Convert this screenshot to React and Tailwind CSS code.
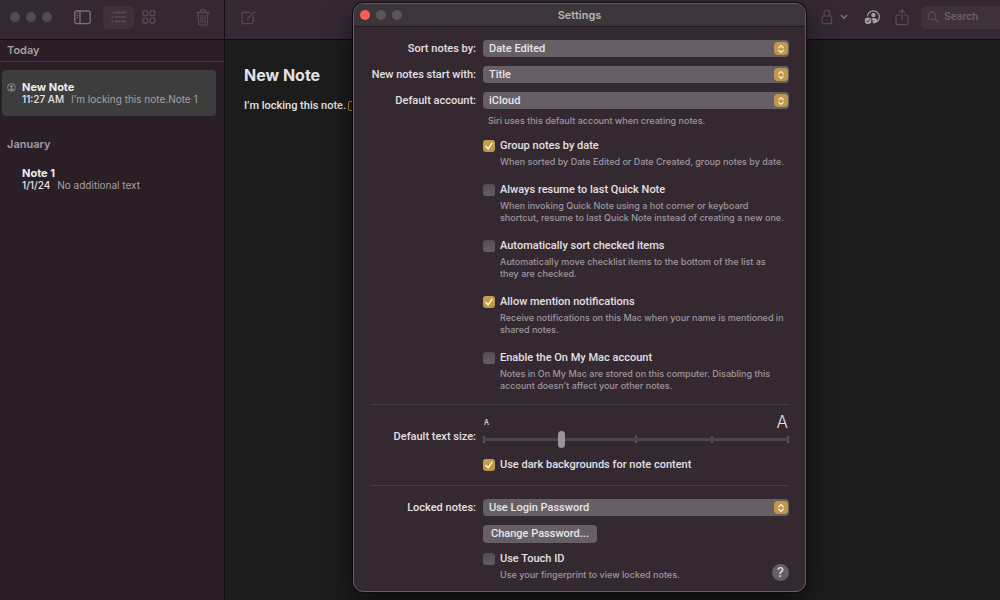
import { useState } from "react";

const options = {
  sort: ["Date Edited", "Date Created", "Title"],
  start: ["Title", "Heading", "Subheading", "Body"],
  account: ["iCloud", "On My Mac"],
  locked: ["Use Login Password", "Use Custom Password"],
};

function SidebarIcon() {
  return (
    <svg width="17" height="15" viewBox="0 0 17 15" fill="none" stroke="currentColor" strokeWidth="1.3">
      <rect x="0.8" y="1" width="15.4" height="12.6" rx="1.8" />
      <path d="M6 1v12.6" />
      <path d="M2.6 3.7h1.6M2.6 5.7h1.6M2.6 7.7h1.6" strokeWidth="1" />
    </svg>
  );
}

function ListIcon() {
  return (
    <svg width="16" height="14" viewBox="0 0 16 14" fill="none" stroke="currentColor" strokeWidth="1.3">
      <path d="M4.2 2.5h10.2M4.2 7h10.2M4.2 11.5h10.2" strokeLinecap="round" />
      <g fill="currentColor" stroke="none">
        <circle cx="1.4" cy="2.5" r="1" />
        <circle cx="1.4" cy="7" r="1" />
        <circle cx="1.4" cy="11.5" r="1" />
      </g>
    </svg>
  );
}

function GalleryIcon() {
  return (
    <svg width="14" height="14" viewBox="0 0 14 14" fill="none" stroke="currentColor" strokeWidth="1.3">
      <rect x="1" y="0.8" width="4.6" height="4.8" rx="1" />
      <rect x="8.2" y="0.8" width="4.6" height="4.8" rx="1" />
      <rect x="1" y="8.2" width="4.6" height="4.8" rx="1" />
      <rect x="8.2" y="8.2" width="4.6" height="4.8" rx="1" />
    </svg>
  );
}

function TrashIcon() {
  return (
    <svg width="14" height="17" viewBox="0 0 14 17" fill="none" stroke="currentColor" strokeWidth="1.2" strokeLinecap="round">
      <path d="M0.8 3.4h12.4" />
      <path d="M4.6 3.2V2c0-.7.4-1.1 1.1-1.1h2.6c.7 0 1.1.4 1.1 1.1v1.2" />
      <path d="M2.1 3.6l.6 11c0 .9.6 1.4 1.4 1.4h5.8c.8 0 1.4-.5 1.4-1.4l.6-11" />
      <path d="M4.8 6l.2 7.6M7 6v7.6M9.2 6L9 13.6" strokeWidth="1" />
    </svg>
  );
}

function ComposeIcon() {
  return (
    <svg width="15" height="15" viewBox="0 0 15 15" fill="none" stroke="currentColor" strokeWidth="1.2" strokeLinecap="round">
      <path d="M9.2 2.4H2.8C1.6 2.4 1 3 1 4.2v7.6c0 1.2.6 1.8 1.8 1.8h7.6c1.2 0 1.8-.6 1.8-1.8V6" />
      <path d="M13.2 1.4L6.8 7.8l-.8 1.6 1.6-.8L14 2.2z" strokeWidth="0.9" strokeLinejoin="round" />
    </svg>
  );
}

function LockIcon() {
  return (
    <svg width="12" height="16" viewBox="0 0 12 16" fill="none" stroke="currentColor" strokeWidth="1.2">
      <rect x="1" y="7" width="9.6" height="7.6" rx="1.3" />
      <path d="M3 7V4.2C3 2.2 4.2 1 5.8 1s2.8 1.2 2.8 3.2V7" />
    </svg>
  );
}

function CollaborateIcon() {
  return (
    <svg width="17" height="16" viewBox="0 0 17 16" fill="none">
      <path d="M3.4 7.2A6 6 0 1 1 9.2 13.8" stroke="currentColor" strokeWidth="1.2" />
      <circle cx="9.400" cy="6" r="2.200" fill="currentColor" />
      <path d="M7.200 9.500c2.400-1.100 5.300-.6 6.400 1.500-.8 1.700-2.600 2.800-5.200 2.800.7-1.500.2-3.300-1.200-4.300z" fill="currentColor" />
      <circle cx="4" cy="11.700" r="3.300" fill="currentColor" />
      <path d="M2.500 11.800l1.200 1.200 1.900-2.500" stroke="#34283a" strokeWidth="0.900" strokeLinecap="round" />
    </svg>
  );
}

function ShareIcon() {
  return (
    <svg width="14" height="17" viewBox="0 0 14 17" fill="none" stroke="currentColor" strokeWidth="1.2" strokeLinecap="round" strokeLinejoin="round">
      <path d="M4.600 6H2.600C1.600 6 1 6.500 1 7.500v6.600c0 1 .6 1.500 1.600 1.500h8.800c1 0 1.600-.5 1.600-1.500V7.500c0-1-.6-1.500-1.600-1.500H9.400" />
      <path d="M7 10.500V1M4.500 3.300L7 .9l2.500 2.400" />
    </svg>
  );
}

function SearchIcon() {
  return (
    <svg className="shrink-0" width="12" height="12" viewBox="0 0 12 12" fill="none" stroke="currentColor" strokeWidth="1.4" strokeLinecap="round">
      <circle cx="4.900" cy="4.900" r="3.900" />
      <path d="M7.800 7.800l3.300 3.300" />
    </svg>
  );
}

function PersonBadge() {
  return (
    <svg className="mt-0.5" width="9" height="9" viewBox="0 0 9 9" fill="none">
      <circle cx="4.500" cy="4.500" r="3.900" stroke="currentColor" strokeWidth="0.800" />
      <circle cx="4.500" cy="3.500" r="1.300" fill="currentColor" />
      <path d="M2.200 6.600c.8-1.600 3.800-1.600 4.600 0-.9 1.100-3.700 1.100-4.600 0z" fill="currentColor" />
    </svg>
  );
}

function ToolButton({ label, className = "", children }) {
  return (
    <button type="button" aria-label={label} className={`flex shrink-0 items-center justify-center ${className}`}>
      {children}
    </button>
  );
}

function NoteItem({ title, date, text, selected, shared }) {
  return (
    <a
      href="#note"
      className={`mr-2 ml-0.5 flex gap-1.5 rounded py-[11px] pr-2 pl-[5px] ${selected ? "bg-[#3d3d3d]" : ""}`}
    >
      <span className="w-[9px] shrink-0 text-[#9a969a]">{shared && <PersonBadge />}</span>
      <span className="flex min-w-0 flex-col text-[10px] leading-3">
        <span className="text-[11px] font-bold text-[#eeecee]">{title}</span>
        <span className="flex gap-[7px] whitespace-nowrap">
          <span className="font-medium text-[#e6e4e6]">{date}</span>
          <span className="text-[#a5a1a5]">{text}</span>
        </span>
      </span>
    </a>
  );
}

function Select({ id, items }) {
  return (
    <div className="relative h-[17px] min-w-0">
      <select
        id={id}
        className="block h-full w-full appearance-none rounded bg-[#665f66] px-1.5 font-['Roboto','Liberation_Sans',sans-serif] text-[11px] leading-4 font-medium text-[#e9e6e9] outline-none"
      >
        {items.map((item) => (
          <option key={item}>{item}</option>
        ))}
      </select>
      <span className="pointer-events-none absolute inset-y-0.5 right-px flex w-3.5 items-center justify-center rounded bg-[#c1984a]">
        <svg width="8" height="10" viewBox="0 0 8 10" fill="none" stroke="#f5ead2" strokeWidth="1.300" strokeLinecap="round" strokeLinejoin="round">
          <path d="M1.700 3.700L4 1.500l2.300 2.200M1.700 6.300L4 8.500l2.300-2.200" />
        </svg>
      </span>
    </div>
  );
}

function SelectRow({ id, label, items }) {
  return (
    <div className="grid grid-cols-[106px_1fr] items-center gap-[7px]">
      <label htmlFor={id} className="text-right font-['Roboto','Liberation_Sans',sans-serif] text-[11px] leading-4 whitespace-nowrap">
        {label}
      </label>
      <Select id={id} items={items} />
    </div>
  );
}

function CheckOption({ id, label, description, initial = false }) {
  const [checked, setChecked] = useState(initial);
  return (
    <div className="grid grid-cols-[12px_1fr] gap-x-[5px] gap-y-0.5">
      <span className="relative flex h-4 items-center">
        <input
          id={id}
          type="checkbox"
          checked={checked}
          onChange={(event) => setChecked(event.target.checked)}
          className="size-3 appearance-none rounded-[3px] bg-linear-to-b from-[#534a52] to-[#665e65] checked:from-[#c79e4e] checked:to-[#bd9344]"
        />
        {checked && (
          <svg className="pointer-events-none absolute inset-x-0" width="12" height="12" viewBox="0 0 12 12" fill="none" stroke="#fff6e0" strokeWidth="1.500" strokeLinecap="round" strokeLinejoin="round">
            <path d="M3 6.400l2.200 2.500L9 3.200" />
          </svg>
        )}
      </span>
      <label htmlFor={id} className="font-['Roboto','Liberation_Sans',sans-serif] text-[11px] leading-4">
        {label}
      </label>
      {description && <p className="col-start-2 text-[9px] leading-3 text-[#9f979e]">{description}</p>}
    </div>
  );
}

function SettingsWindow() {
  return (
    <section
      role="dialog"
      aria-labelledby="settings-title"
      className="absolute top-[3px] left-[353px] w-[453px] overflow-hidden rounded-[10px] border border-[#655d64] bg-[#342931] font-medium text-[#e4e0e4] shadow-[0_0_0_1px_#0c0a0c,0_12px_28px_rgba(0,0,0,0.55)]"
    >
      <header className="grid h-[23px] grid-cols-[1fr_auto_1fr] items-center border-b border-[#211a20] bg-[#3c363b] px-1.5">
        <div className="flex gap-1.5">
          <button type="button" aria-label="Close" className="size-2.5 rounded-full bg-[#fb5a55]" />
          <button type="button" aria-label="Minimize" className="size-2.5 rounded-full bg-[#5b555a]" />
          <button type="button" aria-label="Zoom" className="size-2.5 rounded-full bg-[#5b555a]" />
        </div>
        <h1 id="settings-title" className="text-[11px] leading-4 font-semibold text-[#b9b4b8]">
          Settings
        </h1>
      </header>
      <form className="px-4 pt-[13px] pb-2.5">
        <div className="flex flex-col gap-[9px]">
          <SelectRow id="sort" label="Sort notes by:" items={options.sort} />
          <SelectRow id="start" label="New notes start with:" items={options.start} />
          <SelectRow id="account" label="Default account:" items={options.account} />
        </div>
        <div className="pl-[113px]">
          <p className="mt-1.5 pl-[5px] text-[9px] leading-3 text-[#9f979e]">
            Siri uses this default account when creating notes.
          </p>
          <div className="mt-[11px] flex flex-col gap-3.5">
            <CheckOption id="group" initial label="Group notes by date" description="When sorted by Date Edited or Date Created, group notes by date." />
            <CheckOption
              id="resume"
              label="Always resume to last Quick Note"
              description={<>When invoking Quick Note using a hot corner or keyboard<br />shortcut, resume to last Quick Note instead of creating a new one.</>}
            />
            <CheckOption
              id="autosort"
              label="Automatically sort checked items"
              description={<>Automatically move checklist items to the bottom of the list as<br />they are checked.</>}
            />
            <CheckOption
              id="mention"
              initial
              label="Allow mention notifications"
              description={<>Receive notifications on this Mac when your name is mentioned in<br />shared notes.</>}
            />
            <CheckOption
              id="onmymac"
              label="Enable the On My Mac account"
              description={<>Notes in On My Mac are stored on this computer. Disabling this<br />account doesn’t affect your other notes.</>}
            />
          </div>
        </div>
        <hr className="mt-3 border-[#463c44]" />
        <div className="mt-2.5 grid grid-cols-[106px_1fr] gap-x-[7px]">
          <div className="col-start-2 flex h-4 items-center justify-between px-px" aria-hidden="true">
            <span className="text-[7px]">A</span>
            <span className="text-[17px] font-light">A</span>
          </div>
          <label htmlFor="textsize" className="text-right font-['Roboto','Liberation_Sans',sans-serif] text-[11px] leading-3">
            Default text size:
          </label>
          <div className="relative h-[17px]">
            <div className="absolute inset-x-0 top-[5px] flex h-[7px] justify-between" aria-hidden="true">
              <span className="w-0.5 bg-[#5d545b]" />
              <span className="w-0.5 bg-[#5d545b]" />
              <span className="w-0.5 bg-[#5d545b]" />
              <span className="w-0.5 bg-[#5d545b]" />
              <span className="w-0.5 bg-[#5d545b]" />
            </div>
            <input
              id="textsize"
              type="range"
              min="0"
              max="4"
              defaultValue="1"
              className="relative block h-[17px] w-full appearance-none bg-transparent [&::-webkit-slider-runnable-track]:h-[3px] [&::-webkit-slider-runnable-track]:rounded-full [&::-webkit-slider-runnable-track]:bg-[#4d444b] [&::-webkit-slider-thumb]:-mt-[7px] [&::-webkit-slider-thumb]:h-[17px] [&::-webkit-slider-thumb]:w-[7px] [&::-webkit-slider-thumb]:appearance-none [&::-webkit-slider-thumb]:rounded-full [&::-webkit-slider-thumb]:bg-[#9a9398]"
            />
          </div>
        </div>
        <div className="mt-[9px] pl-[113px]">
          <CheckOption id="dark" initial label="Use dark backgrounds for note content" />
        </div>
        <hr className="mt-3 border-[#463c44]" />
        <div className="mt-[13px]">
          <SelectRow id="locked" label="Locked notes:" items={options.locked} />
        </div>
        <div className="mt-[9px] pl-[113px]">
          <button type="button" className="block h-[18px] rounded bg-[#665f66] px-2 font-['Roboto','Liberation_Sans',sans-serif] text-[11px] leading-[18px] text-[#e9e6e9]">
            Change Password...
          </button>
          <div className="mt-2 flex items-end justify-between">
            <CheckOption id="touch" label="Use Touch ID" description="Use your fingerprint to view locked notes." />
            <button type="button" aria-label="Help" className="size-[17px] rounded-full bg-[#665f66] text-[13px] leading-[17px]">
              ?
            </button>
          </div>
        </div>
      </form>
    </section>
  );
}

export default function App() {
  return (
    <div className="relative flex min-h-screen overflow-hidden bg-[#1c1c1c] font-['Inter','Liberation_Sans',sans-serif]">
      <aside className="flex w-[225px] shrink-0 flex-col border-r border-[#120e11] bg-[#2a1f27]">
        <header className="flex h-10 items-center border-b border-[#120e11] bg-[#342833] pr-3.5 pb-[5px] pl-2.5 text-[#574b56]">
          <div className="flex gap-1.5">
            <button type="button" aria-label="Close window" className="size-2.5 rounded-full bg-[#544a53]" />
            <button type="button" aria-label="Minimize window" className="size-2.5 rounded-full bg-[#544a53]" />
            <button type="button" aria-label="Zoom window" className="size-2.5 rounded-full bg-[#544a53]" />
          </div>
          <ToolButton label="Toggle sidebar" className="ml-[22px] text-[#7b707a]">
            <SidebarIcon />
          </ToolButton>
          <ToolButton label="List view" className="ml-3 h-[23px] w-[31px] rounded-[5px] bg-[#3d313a]">
            <ListIcon />
          </ToolButton>
          <ToolButton label="Gallery view" className="ml-2">
            <GalleryIcon />
          </ToolButton>
          <ToolButton label="Delete" className="ml-auto">
            <TrashIcon />
          </ToolButton>
        </header>
        <h2 className="border-b border-[#43383f] px-[7px] pt-0.5 pb-[3px] text-[11px] leading-4 font-semibold text-[#a39ca2]">Today</h2>
        <div className="mt-2">
          <NoteItem title="New Note" date="11:27 AM" text="I’m locking this note.Note 1" selected shared />
        </div>
        <h2 className="mt-5 px-[7px] text-[11px] leading-4 font-semibold text-[#a39ca2]">January</h2>
        <div className="mt-1">
          <NoteItem title="Note 1" date="1/1/24" text="No additional text" />
        </div>
      </aside>

      <main className="flex min-w-0 flex-1 flex-col">
        <header className="flex h-10 shrink-0 items-center border-b border-[#0d0b0d] bg-[#342833] pb-[5px] pl-4 text-[#574b56]">
          <ToolButton label="New note">
            <ComposeIcon />
          </ToolButton>
          <ToolButton label="Lock note" className="ml-auto gap-[7px]">
            <LockIcon />
            <svg width="8" height="6" viewBox="0 0 8 6" fill="none" stroke="#7b707a" strokeWidth="1.400" strokeLinecap="round" strokeLinejoin="round">
              <path d="M1.200 1.300L4 4.200l2.800-2.900" />
            </svg>
          </ToolButton>
          <ToolButton label="Collaborate" className="ml-4 text-[#a59ea4]">
            <CollaborateIcon />
          </ToolButton>
          <ToolButton label="Share" className="ml-3.5">
            <ShareIcon />
          </ToolButton>
          <label className="ml-3 flex h-[23px] w-[79px] items-center gap-[5px] rounded-l-[5px] bg-[#3d313a] pl-1.5">
            <SearchIcon />
            <input
              type="search"
              aria-label="Search"
              placeholder="Search"
              className="w-full min-w-0 bg-transparent font-['Roboto','Liberation_Sans',sans-serif] text-[11px] font-medium outline-none placeholder:text-[#6a5f68]"
            />
          </label>
        </header>
        <article className="px-[19px] pt-[25px] text-[#e2e2e2]">
          <h1 className="text-[16px] leading-5 font-bold">New Note</h1>
          <p className="mt-[13px] flex items-center font-['Roboto','Liberation_Sans',sans-serif] text-[11px] leading-4 font-medium whitespace-nowrap">
            I’m locking this note.
            <span className="ml-0.5 h-2.5 w-2 rounded-[2px] border border-[#b98a2e]" />
          </p>
        </article>
      </main>

      <SettingsWindow />
    </div>
  );
}
